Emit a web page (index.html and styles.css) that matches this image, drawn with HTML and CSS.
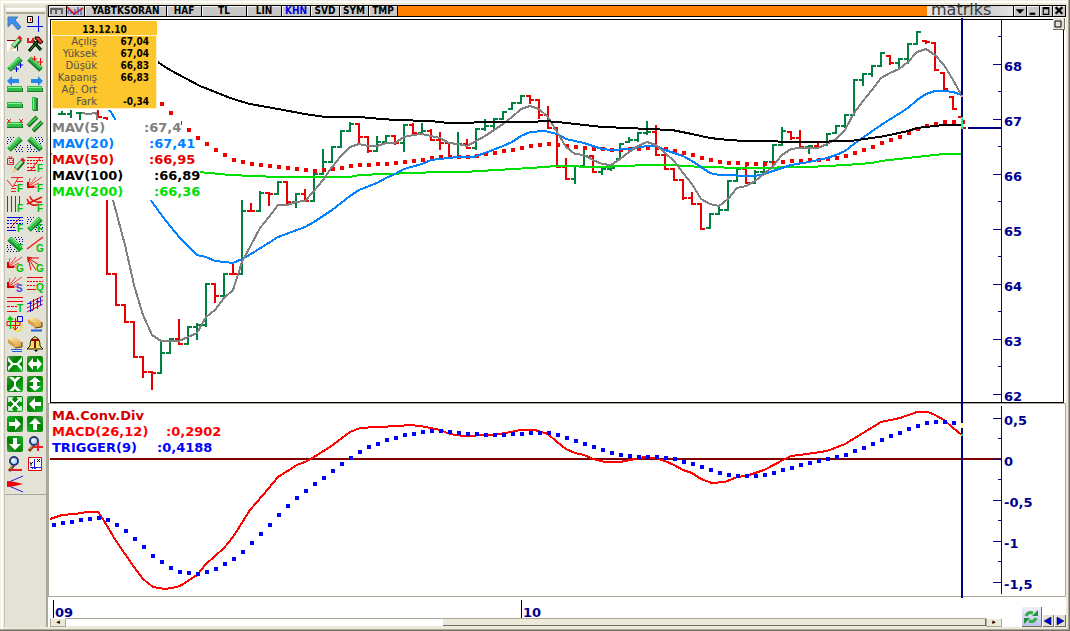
FILE: index.html
```html
<!DOCTYPE html>
<html lang="tr">
<head>
  <meta charset="UTF-8" />
  <meta name="viewport" content="width=device-width, initial-scale=1.0" />
  <title>YABTKSORAN</title>
  <link rel="stylesheet" href="styles.css">
</head>
<body>
  <svg class="defs" width="0" height="0" aria-hidden="true">
    <defs>
      <linearGradient id="tile" x1="0" y1="0" x2="1" y2="1">
        <stop offset="0" stop-color="#3c9c3c" /><stop offset=".4" stop-color="#008000" /><stop offset="1" stop-color="#18b428" />
      </linearGradient>
      <linearGradient id="gold" x1="0" y1="0" x2="1" y2="1">
        <stop offset="0" stop-color="#fff0b0" /><stop offset="1" stop-color="#d89838" />
      </linearGradient>
      <g id="diag"><path d="M2 14L14 3" stroke="#1c7c2c" stroke-width="5" /><path d="M2 13L13 2" stroke="#30c048" stroke-width="4" /><path d="M2 11L12 2" stroke="#90f098" /></g>
      <g id="back"><path d="M2 3L14 14" stroke="#1c7c2c" stroke-width="5" /><path d="M3 2L14 12" stroke="#30c048" stroke-width="4" /><path d="M4 2L14 11" stroke="#90f098" /></g>
      <g id="flat"><path d="M0 8h16v4H0z" fill="#1c7c2c" /><path d="M0 6h15v5H0z" fill="#30c048" /><path d="M1 7.500h13" stroke="#90f098" /></g>
      <g id="dots" fill="none" stroke="#000080" stroke-dasharray="1 2"><path d="M0 1.500h8M1 3.500h6M0 5.500h4M0 7.500h3M10 9.500h6M9 11.500h7M8 13.500h8M9 15.500h7" /></g>
      <g id="dots2" fill="none" stroke="#000080" stroke-dasharray="1 2"><path d="M8 1.500h8M9 3.500h7M12 5.500h4M13 7.500h3M0 9.500h4M0 11.500h6M1 13.500h8M0 15.500h10" /></g>
      <g id="fan" fill="none" stroke="#f04040"><path d="M1 11L15 1M1 11L9 1M1 11L3 2M1 11h9M1 12L12 7" /><path d="M1 6v5h6" stroke="#e00000" stroke-width="2" /></g>
      <g id="pencil"><path d="M6 11L13 3" stroke="#206020" stroke-width="5" /><path d="M6 10L12 3" stroke="#a0e8a0" stroke-width="3" /><path d="M12 3l2-2" stroke="#e02020" stroke-width="4" /><path d="M2 15l2-5 3 3z" fill="#f0c890" /></g>
      <g id="pane"><rect width="16" height="16" rx="2" fill="url(#tile)" /></g>
      <g id="arrow"><use href="#pane" /><path d="M2 8l6-6v4h6v4H8v4z" fill="#fff" /></g>
      <g id="lens"><path d="M7 9l-5 6" stroke="#804020" stroke-width="3" /><path d="M6 9l-3 4" stroke="#f0b060" /><circle cx="7" cy="5" r="4" fill="#b8e0ff" stroke="#283878" stroke-width="2" /><circle cx="6" cy="4" r="1.500" fill="#fff" /></g>
      <g id="eraser"><path d="M1 3l7-2 7 5v5l-6 1-8-5z" fill="url(#gold)" /><path d="M1 3l7 5v4l-7-5z" fill="#d8a050" /><path d="M8 12l7-1V6" fill="none" stroke="#604010" /></g>
    </defs>
  </svg>

  <div class="window">
    <aside class="toolbar" aria-label="Araçlar">
      <div class="grip"></div>
      <div class="tools">
        <button aria-label="Seç"><svg viewBox="0 0 16 16"><path d="M1 1h10L8 4l6 7-3 3-6-7-4 4z" fill="#3c90f0" stroke="#5078b0" /></svg></button>
        <button aria-label="İmleç"><svg viewBox="0 0 16 16"><path d="M11.500 0v16M0 10.500h16" stroke="#0000f0" /><path d="M.5.5h5v6h-5z" fill="#fff" stroke="#000" /><path d="M3.500 2v3" stroke="#f00" /></svg></button>
        <button aria-label="Çiz"><svg viewBox="0 0 16 16"><path d="M0 5h10v10H0z" fill="#fff" /><path d="M0 4.500h10.500V15" stroke="#900000" /><use href="#pencil" /></svg></button>
        <button aria-label="Ayarlar"><svg viewBox="0 0 16 16"><path d="M5 4l9 10" stroke="#000" stroke-width="3" /><path d="M5 4l9 10" stroke="#20b020" /><path d="M2 15L12 4" stroke="#000" stroke-width="3" /><path d="M3 14l7-8" stroke="#20c020" /><path d="M8 1h4l4 5-3 2-3-4-2-1z" fill="#f03020" stroke="#000" /><path d="M1 2v4h5V2" stroke="#e02020" stroke-width="2" /></svg></button>
        <button aria-label="Destek"><svg viewBox="0 0 16 16"><use href="#diag" /><path d="M7 13h5M9.500 11v5M11 9h5M13.500 7v5" stroke="#0000e0" /></svg></button>
        <button aria-label="Direnç"><svg viewBox="0 0 16 16"><use href="#back" /><path d="M5 3h5M7.500 0v5M10 6h6M13.500 2v7" stroke="#f00000" /></svg></button>
        <button aria-label="Sola uzat"><svg viewBox="0 0 16 16"><use href="#flat" y="4" /><path d="M0 5l5-5v3h7v4H5v3z" fill="#2888e8" /></svg></button>
        <button aria-label="Sağa uzat"><svg viewBox="0 0 16 16"><use href="#flat" y="4" /><path d="M16 5l-5-5v3H4v4h7v3z" fill="#2888e8" /></svg></button>
        <button aria-label="Yatay çizgi"><svg viewBox="0 0 16 16"><use href="#flat" /></svg></button>
        <button aria-label="Dikey çizgi"><svg viewBox="0 0 16 16"><path d="M6 2h5v13H6z" fill="#1c7c2c" /><path d="M5 1h4v13H5z" fill="#30c048" /><path d="M6.500 2v11" stroke="#90f098" /></svg></button>
        <button aria-label="Kanal ucu"><svg viewBox="0 0 16 16"><use href="#flat" /><path d="M0 3l4 4M4 3L0 7M12 3l4 4M16 3l-4 4" stroke="#f02020" /></svg></button>
        <button aria-label="Paralel"><svg viewBox="0 0 16 16"><path d="M1 10L10 1M6 15l9-9" stroke="#206020" stroke-width="4" /><path d="M1 9l9-8M6 14l9-8" stroke="#30d048" stroke-width="2" /></svg></button>
        <button aria-label="Bölge yukarı"><svg viewBox="0 0 16 16"><use href="#dots" /><use href="#diag" /></svg></button>
        <button aria-label="Bölge aşağı"><svg viewBox="0 0 16 16"><use href="#dots2" /><use href="#back" /></svg></button>
        <button aria-label="Not"><svg viewBox="0 0 16 16"><path d="M.5 2.500h6v6h-6zM2 0l1 2M5 0L4 2M2 4.500h1M5 4.500h1M2 6.500h4" stroke="#e02020" /><use href="#pencil" x="3" y="2" /></svg></button>
        <button aria-label="Fibonacci düzeltme"><svg viewBox="0 0 16 16"><path d="M0 1.500h16M0 14.500h9" stroke="#f00000" /><path d="M0 4.500h16M0 7.500h10M0 11.500h9" stroke="#f00000" stroke-dasharray="2 1" /><path d="M13 2L4 14" stroke="#f00000" /><text x="10" y="16">F</text></svg></button>
        <button aria-label="Fibonacci uzatma"><svg viewBox="0 0 16 16"><path d="M4 1.500h12M9 5.500h7M7 9.500h3M4 12.500h5M4 15.500h5M0 4l6 7 5-9" stroke="#f02020" /><text x="10" y="16">F</text></svg></button>
        <button aria-label="Fibonacci yelpaze"><svg viewBox="0 0 16 16"><use href="#fan" /><text x="10" y="16">F</text></svg></button>
        <button aria-label="Fibonacci zaman"><svg viewBox="0 0 16 16"><path d="M.5 0v16M4.500 0v16M8.500 0v16M12.500 0v8" stroke="#f00000" /><text x="10" y="16">F</text></svg></button>
        <button aria-label="Fibonacci yay"><svg viewBox="0 0 16 16"><path d="M0 8L15 1M3 0q1 7 12 6M0 3q4 9 12 5" stroke="#e01010" stroke-width="1.500" /><text x="10" y="16">F</text></svg></button>
        <button aria-label="Fibonacci kanal"><svg viewBox="0 0 16 16"><path d="M0 1.500h16M0 14.500h9" stroke="#0000f0" /><path d="M0 4.500h16M0 7.500h16M0 11.500h9" stroke="#0000f0" stroke-dasharray="2 1" /><path d="M13 2L3 12" stroke="#f00000" /><text x="10" y="16">F</text></svg></button>
        <button aria-label="Fibonacci bölge yukarı"><svg viewBox="0 0 16 16"><use href="#dots" /><use href="#diag" /><text x="10" y="16">F</text></svg></button>
        <button aria-label="Fibonacci bölge aşağı"><svg viewBox="0 0 16 16"><use href="#dots2" /><use href="#back" /><text x="10" y="16">F</text></svg></button>
        <button aria-label="Gann çizgisi"><svg viewBox="0 0 16 16"><path d="M0 13L16 1" stroke="#f02020" stroke-width="1.500" /><text x="9" y="16">G</text></svg></button>
        <button aria-label="Gann yelpaze"><svg viewBox="0 0 16 16"><use href="#fan" /><text x="9" y="16">G</text></svg></button>
        <button aria-label="Gann açıları"><svg viewBox="0 0 16 16"><path d="M1 2l3 12M1 2l8 12M1 2l11 7M1 2h11M0 1l5 1M1 1v5" stroke="#e00000" /><text x="9" y="16">G</text></svg></button>
        <button aria-label="Hız çizgileri"><svg viewBox="0 0 16 16"><use href="#fan" /><text x="9" y="16" class="violet">S</text></svg></button>
        <button aria-label="Çeyrek çizgileri"><svg viewBox="0 0 16 16"><path d="M0 1.500h16M0 13.500h9" stroke="#f00000" /><path d="M0 5.500h16M0 9.500h10" stroke="#f00000" stroke-dasharray="2 1" /><text x="9" y="15">Q</text></svg></button>
        <button aria-label="Tirone"><svg viewBox="0 0 16 16"><path d="M0 1.500h16M0 5.500h16M0 15.500h10" stroke="#f00000" /><path d="M0 10.500h10" stroke="#f00000" stroke-dasharray="3 1" /><text x="10" y="16">T</text></svg></button>
        <button aria-label="Regresyon"><svg viewBox="0 0 16 16"><path d="M0 8L16 0M0 12L16 4M0 16L16 8" stroke="#e00020" /><path d="M3.500 5v11M6.500 3v11M10.500 2v11M13.500 1v9M2 14.500h4M1 7.500h4M9 5.500h4" stroke="#2020e0" /></svg></button>
        <button aria-label="Şekiller"><svg viewBox="0 0 16 16"><circle cx="11" cy="11" r="4" stroke="#f0e000" stroke-width="1.500" /><path d="M0 5.500h13v4H0zM8.500 2v11M6 11l2 3 3-3" stroke="#f00000" /><path d="M10.500.5h5v5h-5z" stroke="#0000f0" /><path d="M3.500 13V1M1 4l2-3 3 3" stroke="#00c800" stroke-width="1.500" /></svg></button>
        <button aria-label="Sil"><svg viewBox="0 0 16 16"><use href="#eraser" /><path d="M4 14.500h11" stroke="#2060e0" stroke-width="2" /></svg></button>
        <button aria-label="Tümünü sil"><svg viewBox="0 0 16 16"><use href="#eraser" /><path d="M4 13.500h11M5 15.500h10" stroke="#2060e0" /></svg></button>
        <button aria-label="Alarm"><svg viewBox="0 0 16 16"><path d="M6 2q2-3 4 0 3 1 3 8l3 3H0l3-3q0-7 3-8z" fill="#f0e060" stroke="#202000" /><path d="M7 14h4l-2 2z" fill="#000" /><path d="M4 4h8M8 4v8" stroke="#900000" stroke-width="2" /></svg></button>
        <button aria-label="Yatay daralt"><svg viewBox="0 0 16 16"><use href="#pane" /><path d="M1 1l6 7-6 7M15 1L9 8l6 7" fill="#fff" /><path d="M4 8h8" stroke="#fff" stroke-width="2" /><path d="M1 5v6l3-3zM15 5v6l-3-3z" fill="#008000" /></svg></button>
        <button aria-label="Yatay genişlet"><svg viewBox="0 0 16 16"><use href="#pane" /><path d="M1 8l5-6v12zM15 8l-5-6v12z" fill="#fff" /><path d="M4 8h8" stroke="#fff" stroke-width="4" /></svg></button>
        <button aria-label="Dikey daralt"><svg viewBox="0 0 16 16"><use href="#pane" /><path d="M2 1l6 6 6-6M2 15l6-6 6 6" fill="#fff" /><path d="M5 0h6L8 3zM5 16h6l-3-3z" fill="#008000" /><path d="M8 3v10" stroke="#fff" stroke-width="2" /></svg></button>
        <button aria-label="Dikey genişlet"><svg viewBox="0 0 16 16"><use href="#pane" /><path d="M8 1l6 5H2zM8 15l6-5H2z" fill="#fff" /><path d="M8 4v8" stroke="#fff" stroke-width="4" /></svg></button>
        <button aria-label="Sığdır"><svg viewBox="0 0 16 16"><use href="#pane" /><path d="M3 3l10 10M13 3L3 13" stroke="#fff" stroke-width="2" /><path d="M2 6V2h4M10 2h4v4M14 10v4h-4M6 14H2v-4" stroke="#fff" stroke-width="1.500" /></svg></button>
        <button aria-label="Sol"><svg viewBox="0 0 16 16"><use href="#arrow" /></svg></button>
        <button aria-label="Sağ"><svg viewBox="0 0 16 16"><use href="#arrow" transform="rotate(180 8 8)" /></svg></button>
        <button aria-label="Yukarı"><svg viewBox="0 0 16 16"><use href="#arrow" transform="rotate(90 8 8)" /></svg></button>
        <button aria-label="Aşağı"><svg viewBox="0 0 16 16"><use href="#arrow" transform="rotate(270 8 8)" /></svg></button>
        <button aria-label="Yakınlaştır"><svg viewBox="0 0 16 16"><use href="#lens" /><path d="M6 11h10M11 6v9" stroke="#f02020" stroke-width="2" /></svg></button>
        <button aria-label="Uzaklaştır"><svg viewBox="0 0 16 16"><use href="#lens" /><path d="M4 14h11" stroke="#e02020" stroke-width="2" /></svg></button>
        <button aria-label="Eksenler"><svg viewBox="0 0 16 16"><path d="M1.500 1.500h13v13h-13z" fill="#fff" stroke="#f00000" /><path d="M7.500 3v10M3 11.500h11M5 13l2-2 2 2" stroke="#2020e0" /><path d="M10 3l3 3M13 3l-3 3M3 6l1 2 2-2M4 8v2" stroke="#000" /></svg></button>
        <button aria-label="Projeksiyon"><svg viewBox="0 0 16 16"><path d="M2 6L16 0M2 10l14 6" stroke="#2020e0" /><path d="M0 5l8 1 8 2-8 2-8 1z" fill="#f00000" /></svg></button>
      </div>
    </aside>

    <main class="chart">
      <header class="titlebar">
        <button aria-label="Bar tipi" class="pic"><svg viewBox="0 0 17 10"><path d="M2 8V3h5v5M7 3h6v5" stroke="#606060" stroke-width="2" /></svg></button>
        <button aria-label="Gösterge" class="pic"><svg viewBox="0 0 17 10"><path d="M0 1l7 7 9-6" stroke="#e02020" stroke-width="2" /><path d="M1 8V4M4 8V5M8 9V3M11 9V1M14 9V4" stroke="#2040d0" /></svg></button>
        <button class="symbol">YABTKSORAN</button>
        <button class="haf">HAF</button>
        <button class="cur">TL</button>
        <button class="haf">LIN</button>
        <button class="short on">KHN</button>
        <button class="short">SVD</button>
        <button class="short">SYM</button>
        <button class="short">TMP</button>
        <span class="fill"></span>
        <span class="brand">matriks</span>
        <button class="win" aria-label="Menü"><svg viewBox="0 0 10 9"><path d="M1 3h8L5 7z" /></svg></button>
        <button class="win" aria-label="Küçült"><svg viewBox="0 0 10 9"><path d="M2 6h5v2H2z" /></svg></button>
        <button class="win" aria-label="Büyüt"><svg viewBox="0 0 10 9"><path d="M2 1h6v7H2zM3 3v4h4V3z" fill-rule="evenodd" /></svg></button>
        <button class="win" aria-label="Kapat"><svg viewBox="0 0 10 9"><path d="M2 1l6 6M8 1L2 7" stroke="#000" stroke-width="2" /></svg></button>
      </header>

      <section class="panel price">
        <svg class="plot" id="price" viewBox="51 20 952 382" preserveAspectRatio="none">
          <path id="up" class="up" />
          <path id="down" class="down" />
          <polyline class="mav200" points="50,154 199,172 230,175 278,177 350,177 359,175 440,172 465,172 480,171 530,168 557,166 600,167 647,165 672,165 701,167 746,168 809,167 845,165 872,163 881,161 908,158 944,154 962,154" />
          <path id="mav50" class="mav50" />
          <polyline class="mav20" points="60,80 100,100 111,112 115,119 150,199 160,213 170,226 180,238 197,255 206,257 215,261 233,263 242,259 251,254 278,237 305,227 314,222 332,210 350,196 359,190 377,183 386,178 395,174 404,169 422,164 431,160 449,158 458,157 473,157 485,153 503,146 512,142 521,136 530,132 545,131 557,134 566,139 584,143 602,149 611,150 629,149 647,146 656,146 665,150 683,156 692,161 701,167 710,173 719,175 755,176 764,174 773,171 791,165 809,162 827,158 836,155 845,151 854,144 881,125 908,108 917,100 926,94 935,91 944,91 953,92 962,95" />
          <polyline class="mav5" points="82,113 88,114 96,113 106,160 113,200 125,245 134,285 143,315 152,335 161,341 179,341 188,337 197,333 206,317 215,310 224,298 233,290 242,262 251,245 260,228 269,217 278,205 287,205 296,202 305,201 314,191 323,180 332,167 341,156 350,147 359,144 368,146 377,146 386,143 395,143 404,137 413,135 422,134 431,136 440,138 449,143 458,144 467,146 476,141 485,136 494,130 503,124 512,117 521,109 530,106 539,109 548,117 557,132 566,147 575,154 584,155 593,160 602,164 611,165 620,159 629,152 638,146 647,142 656,145 665,153 674,161 683,173 692,184 701,199 710,204 719,206 728,199 737,188 746,186 755,181 764,174 773,166 782,155 791,149 800,148 818,148 827,144 836,139 845,130 854,113 863,101 872,90 881,78 890,73 899,69 908,62 917,52 926,49 935,55 944,65 953,80 962,96" />
          <polyline class="mav100" points="150,57 156,61 170,70 200,86 233,99 250,104 278,109 305,114 325,117 359,117 370,118 395,120 430,121 449,123 500,122 531,122 545,121 557,122 575,124 602,127 629,128 647,129 672,130 692,134 710,138 728,140 746,141 809,142 850,141 865,139 885,136 908,131 917,128 944,125 962,125" />
          <path class="cross" d="M968 128h34" />
          <path class="scale" d="M1001.500 20v382M993 64.500h8M993 119.500h8M993 174.500h8M993 229.500h8M993 284.500h8M993 339.500h8M993 394.500h8M998 36.500h4M998 91.500h4M998 146.500h4M998 201.500h4M998 256.500h4M998 311.500h4M998 366.500h4" />
        </svg>
        <ul class="axis">
          <li>68</li><li>67</li><li>66</li><li>65</li><li>64</li><li>63</li><li>62</li>
        </ul>

        <div class="overlay">
          <table class="quote">
            <caption>13.12.10</caption>
            <tr><th>Açılış</th><td>67,04</td></tr>
            <tr><th>Yüksek</th><td>67,04</td></tr>
            <tr><th>Düşük</th><td>66,83</td></tr>
            <tr><th>Kapanış</th><td>66,83</td></tr>
            <tr><th>Ağ. Ort</th><td></td></tr>
            <tr><th>Fark</th><td>-0,34</td></tr>
          </table>
          <dl class="legend">
            <div class="gray"><dt>MAV(5)</dt><dd>:67,4</dd></div>
            <div class="blue"><dt>MAV(20)</dt><dd>:67,41</dd></div>
            <div class="red"><dt>MAV(50)</dt><dd>:66,95</dd></div>
            <div class="black"><dt>MAV(100)</dt><dd>:66,89</dd></div>
            <div class="green"><dt>MAV(200)</dt><dd>:66,36</dd></div>
          </dl>
        </div>
        <button class="restore" aria-label="Paneli büyüt"><svg viewBox="0 0 8 8"><path d="M1 1h6v6H1z" fill="none" stroke="#000" /></svg></button>
      </section>

      <section class="panel macd">
        <svg class="plot" id="macd" viewBox="49 404 954 192" preserveAspectRatio="none">
          <path class="zero" d="M50 459h951" />
          <polyline class="line" points="50,519 62,515 75,514 87,512 98,512 103,519 116,541 134,567 143,579 153,587 165,589 172,588 180,586 197,575 206,564 224,548 233,537 250,510 263,495 278,477 297,465 305,462 314,457 330,447 350,432 360,428 376,427 400,426 409,425 420,426 431,428 440,430 450,434 463,436 490,435 500,434 521,430 535,430 548,434 557,442 566,449 575,453 584,455 593,459 605,462 620,462 635,459 645,457 655,458 665,461 674,465 683,470 692,473 701,479 712,483 725,482 737,477 746,476 764,470 785,459 791,456 800,455 827,451 845,444 863,433 881,422 900,418 917,412 928,412 935,415 944,420 953,428 962,435" />
          <path id="trigger" class="trigger" />
          <path class="scale" d="M1001.500 406v188M993 418.500h8M993 459.500h8M993 500.500h8M993 541.500h8M993 582.500h8M998 438.500h4M998 479.500h4M998 520.500h4M998 561.500h4" />
        </svg>
        <ul class="axis">
          <li>0,5</li><li>0</li><li>-0,5</li><li>-1</li><li>-1,5</li>
        </ul>
        <div class="overlay">
          <h2>MA.Conv.Div</h2>
          <dl class="legend">
            <div class="bright"><dt>MACD(26,12)</dt><dd>:0,2902</dd></div>
            <div class="navy"><dt>TRIGGER(9)</dt><dd>:0,4188</dd></div>
          </dl>
        </div>
      </section>
      <div class="cursor"><i class="bar"></i><i class="mark"></i><i class="trig"></i><i class="val"></i></div>

      <footer class="bottom">
        <div class="time">
          <div class="years"><span>09</span><span>10</span></div>
          <div class="scroll">
            <button aria-label="Geri">◂</button>
            <div class="track"><span class="thumb"></span></div>
            <button aria-label="İleri">▸</button>
          </div>
        </div>
        <div class="nav">
          <button class="refresh" aria-label="Yenile"><svg viewBox="0 0 16 16"><path d="M3 7q2-5 7-3M13 9q-2 5-7 3" fill="none" stroke="#30b040" stroke-width="3" /><path d="M9 7h6V1zM7 9H1v6z" fill="#209038" /></svg></button>
          <button aria-label="Önceki"><svg viewBox="0 0 8 8"><path d="M7 0v8L0 4z" fill="#0000e0" stroke="#000" stroke-width=".5" /></svg></button>
          <button aria-label="Sonraki"><svg viewBox="0 0 8 8"><path d="M1 0v8l7-4z" fill="#0000e0" stroke="#000" stroke-width=".5" /></svg></button>
        </div>
      </footer>
    </main>
  </div>

  <script>
    const STEP = 9;

    // high, low, close for each week; the open is the previous close
    const first = 62;
    const bars = [
      [112, 114, 114], [100, 117, 100], [113, 130, 113], [100, 105, 100], [100, 117, 117],
      [118, 274, 274], [274, 305, 305], [305, 322, 322], [322, 357, 357], [357, 377, 372],
      [372, 389, 373], [343, 373, 353], [339, 353, 339], [320, 344, 344], [327, 344, 327],
      [324, 339, 325], [284, 326, 284], [284, 302, 296], [274, 296, 274], [264, 274, 274.1],
      [201, 274, 211], [204, 211, 211.1], [192, 211, 193], [193, 205, 194], [182, 194, 182],
      [182, 203, 202], [194, 207, 194], [190, 201, 201], [174, 201, 174], [150, 174, 162],
      [147, 162, 147], [131, 147, 131], [123, 131, 124], [124, 143, 137], [137, 152, 151],
      [137, 151, 142], [136, 142, 136], [136, 144, 143], [125, 151, 125], [124, 134, 133],
      [124, 133, 131], [130, 140, 140], [133, 149, 143], [143, 158, 158], [133, 157, 144],
      [140, 148, 148], [129, 149, 129], [120, 130, 126], [119, 128, 119], [112, 119, 112],
      [103, 109, 103], [96, 103, 96], [96, 103, 100], [100, 118, 115], [107, 128, 128],
      [128, 167, 167], [159, 179, 179], [166, 183, 166], [149, 166, 156], [156, 172, 172],
      [167, 174, 169], [167, 170, 168], [144, 159, 144], [138, 142, 140], [133, 141, 133],
      [122, 134, 132], [126, 155, 155], [155, 169, 169], [169, 180, 180], [180, 199, 198],
      [193, 204, 204], [204, 229, 229], [214, 228, 214], [207, 214, 210], [181, 210, 181],
      [169, 181, 169], [166, 183, 183], [171, 183, 172], [162, 173, 162], [145, 162, 145],
      [128, 145, 131], [132, 139, 138], [131, 147, 147], [146, 153, 146], [143, 147, 147],
      [134, 145, 134], [126, 133, 126], [115, 127, 115], [80, 115, 80], [74, 85, 74],
      [66, 76, 66], [53, 66, 53], [56, 64, 63], [59, 67, 59], [44, 63, 44],
      [32, 44, 32], [41, 43, 42], [43, 70, 70], [73, 91, 89], [97, 109, 109], [117, 128, 128]
    ];

    const mav50 = [104, 113, 123, 130, 138, 144, 150, 155, 160, 162, 164, 165, 166, 167, 168, 169,
      170, 171, 170, 169, 168, 166, 165, 165, 164, 164, 163, 162, 161, 160, 158, 157, 157, 157, 157,
      156, 154, 153, 151, 150, 148, 146, 145, 144, 145, 146, 147, 148, 149, 149, 150, 150, 149, 149,
      148, 148, 149, 151, 153, 155, 158, 160, 162, 163, 163, 164, 164, 164, 163, 162, 161, 161, 160,
      160, 159, 158, 156, 153, 150, 147, 143, 140, 137, 133, 129, 126, 124, 122, 122, 122];

    const trigger = [525, 523, 522, 520, 519, 518, 520, 525, 531, 539, 547, 556, 562, 568, 572, 573,
      574, 572, 569, 564, 559, 552, 543, 534, 525, 515, 506, 498, 491, 484, 478, 471, 464, 458, 452,
      447, 444, 440, 438, 435, 434, 432, 431, 431, 432, 433, 434, 434, 435, 435, 435, 434, 434, 433,
      433, 433, 435, 438, 441, 444, 447, 450, 453, 455, 456, 457, 457, 457, 458, 459, 462, 464, 467,
      470, 473, 475, 476, 476, 476, 475, 473, 470, 468, 465, 463, 461, 459, 457, 455, 451, 448, 444,
      440, 436, 433, 429, 426, 423, 422, 422, 423];

    function drawBars() {
      let up = '', down = '', open = bars[0][2];
      bars.forEach(([high, low, close], i) => {
        const x = first + i * STEP;
        open = Math.min(Math.max(open, high), low);
        const d = `M${x} ${high - 1}V${low + 1}M${x - 4} ${open}h4M${x} ${close}h4`;
        if (close > open) down += d; else up += d;
        open = close;
      });
      document.getElementById('up').setAttribute('d', up);
      document.getElementById('down').setAttribute('d', down);
    }

    function drawDots(id, x0, values) {
      const d = values.map((y, i) => `M${x0 + i * STEP - 2} ${y - 2}h4v4h-4z`).join('');
      document.getElementById(id).setAttribute('d', d);
    }

    drawBars();
    drawDots('mav50', 162, mav50);
    drawDots('trigger', 54, trigger);
  </script>
</body>
</html>
```
FILE: styles.css
```css
* {
  box-sizing: border-box;
}

body {
  margin: 0;
  font-family: 'DejaVu Sans', Verdana, sans-serif;
  font-size: 13px;
  font-weight: bold;
  background: #ece9d8;
}

button {
  margin: 0;
  padding: 0;
  border: 0;
  background: none;
  font: inherit;
  color: inherit;
}

ul, dl, dd, h2 {
  margin: 0;
  padding: 0;
  list-style: none;
}

.defs {
  position: absolute;
}

.window {
  display: flex;
  height: 100vh;
  padding: 5px 4px 4px 4px;
  background: #ece9d8;
  box-shadow: inset -1px -1px #716f64, inset -2px -2px #aca899, inset 1px 1px #f1efe2, inset 3px 3px #fff;
}

/* left toolbar */
.toolbar {
  flex: none;
  width: 44px;
  background: #e3e2d6;
  border-right: 2px solid #aca899;
  border-left: 1px solid #c8c4b4;
}

.grip {
  height: 6px;
  margin: 3px 1px 2px;
  border-top: 2px solid #fff;
  border-bottom: 2px solid #aca899;
  background: #f1efe2;
}

.tools {
  display: grid;
  grid-template-columns: 16px 16px;
  grid-auto-rows: 16px;
  gap: 4px;
  padding: 0 2px 2px;
  border-bottom: 1px solid #aca899;
}

.tools svg {
  display: block;
  width: 16px;
  height: 16px;
  overflow: visible;
  fill: none;
}

.tools text {
  font-family: 'Liberation Sans', Arial, sans-serif;
  font-size: 10px;
  fill: #00c000;
}

.tools .violet {
  fill: #4848e0;
}

/* chart window */
.chart {
  position: relative;
  flex: 1;
  min-width: 0;
  display: flex;
  flex-direction: column;
  background: #fff;
}

.titlebar {
  display: flex;
  gap: 1px;
  height: 12px;
  margin-bottom: 2px;
  padding: 1px;
  background: #000;
  font-family: 'DejaVu Sans Condensed', 'DejaVu Sans', sans-serif;
  font-size: 10px;
  line-height: 10px;
}

.titlebar button {
  flex: none;
  background: #c8c8c8;
  box-shadow: inset 1px 1px #f4f4f4;
  white-space: nowrap;
}

.titlebar svg {
  display: block;
  width: 100%;
  height: 10px;
}

.titlebar .pic { width: 17px; fill: none; }
.titlebar .symbol { width: 81px; }
.titlebar .haf { width: 34px; }
.titlebar .cur { width: 44px; }
.titlebar .short { width: 28px; }
.titlebar .on { color: #0000e0; }
.titlebar .win { width: 12px; }

.fill {
  flex: 1;
  background: #ff8000;
}

.brand {
  width: 86px;
  margin-left: -1px;
  padding-left: 4px;
  background: linear-gradient(90deg, #e8e8e8, #c8c8c8 60%, #e4e4e4);
  color: #383838;
  font-family: 'DejaVu Sans', sans-serif;
  font-size: 16px;
  font-weight: normal;
  line-height: 8px;
}

.panel {
  position: relative;
  display: flex;
  min-height: 0;
}

.price {
  flex: 382 1 0;
  margin: 0 2px;
  border: 1px solid #000;
}

.macd {
  flex: 192 1 0;
  border: 1px solid #aca899;
}

.plot {
  display: block;
  flex: 1;
  min-width: 0;
  height: 100%;
  fill: none;
  stroke-width: 2;
  shape-rendering: crispEdges;
}

.up { stroke: #008040; }
.down { stroke: #e80000; }
.mav5 { stroke: #808080; }
.mav20 { stroke: #0080ff; }
.mav100 { stroke: #000; }
.mav200 { stroke: #00e000; }
.mav50 { fill: #f00000; }
.trigger { fill: #0000ff; }
.line { stroke: #ff0000; }
.zero { stroke: #800000; }
.cross { stroke: #000080; }

.scale {
  stroke: #000090;
  stroke-width: 1;
}

.axis {
  display: grid;
  flex: none;
  width: 60px;
  padding-left: 1px;
  color: #000090;
  line-height: 16px;
}

.price .axis {
  grid-template-rows: 55fr 55fr 55fr 55fr 55fr 55fr 13fr;
  padding-top: 39px;
}

.macd .axis {
  grid-template-rows: 41fr 41fr 41fr 41fr 19fr;
  width: 62px;
  padding-top: 9px;
}

.axis li {
  min-height: 0;
}

.overlay {
  position: absolute;
  top: 0;
  left: 0;
}

.quote {
  width: 105px;
  margin: 1px 0 11px 1px;
  border: 1px solid #fff0c8;
  border-collapse: separate;
  border-spacing: 0;
  background: #fcc62c;
  outline: 1px solid #fff;
  font-size: 10px;
  line-height: 12px;
}

.quote caption {
  padding-top: 3px;
  background: #fcc62c;
  font-family: 'DejaVu Sans Condensed', 'DejaVu Sans', sans-serif;
  line-height: 11px;
}

.quote th {
  width: 44px;
  padding: 0;
  text-align: right;
  font-weight: normal;
  color: #505050;
}

.quote td {
  padding: 0 7px 0 0;
  text-align: right;
  font-family: 'DejaVu Sans Condensed', 'DejaVu Sans', sans-serif;
}

.legend {
  padding-left: 1px;
  line-height: 16px;
}

.legend div {
  display: flex;
  width: max-content;
  background: #fff;
}

.legend dt {
  width: 97px;
}

.gray { color: #808080; }
.gray dt { width: 92px; }
.blue { color: #0080ff; }
.red { color: #e80000; }
.black { color: #000; }
.green { color: #00e000; }
.black dt, .green dt { width: 102px; }
.bright { color: #ff0000; }
.navy { color: #0000ff; }

.macd .overlay {
  padding: 4px 0 0 2px;
}

.macd h2 {
  padding-left: 1px;
  font-size: 13px;
  line-height: 16px;
  color: #d00000;
}

.macd .bright dt { width: 114px; }
.macd .navy dt { width: 105px; }

.restore {
  position: absolute;
  top: -2px;
  right: -2px;
  width: 12px;
  height: 12px;
  background: #e3e2d6;
  border-right: 1px solid #716f64;
  border-bottom: 1px solid #716f64;
}

.restore svg {
  display: block;
  width: 8px;
  height: 8px;
  margin: 1px;
}

/* vertical cursor on the last bar */
.cursor {
  position: absolute;
  top: 13px;
  right: 103px;
  bottom: 29px;
  width: 2px;
  background: #000080;
}

.cursor i {
  position: absolute;
  left: 0;
  width: 2px;
}

.cursor .bar {
  top: 99px;
  height: 12px;
  background: #20f080;
}

.cursor .mark {
  top: 77px;
  height: 2px;
  background: #ff8080;
}

.cursor .trig {
  bottom: 170px;
  height: 5px;
  background: #ffff80;
}

.cursor .val {
  bottom: 162px;
  height: 2px;
  background: #00f080;
}

/* time axis and scroll bar */
.bottom {
  display: flex;
  flex: none;
  height: 30px;
}

.time {
  flex: 1;
  display: flex;
  flex-direction: column;
}

.years {
  display: grid;
  grid-template-columns: 468fr 481fr;
  height: 21px;
  padding: 3px 0 0 5px;
  color: #000090;
}

.years span {
  padding: 6px 0 0 1px;
  border-left: 1px solid #000;
  line-height: 14px;
}

.scroll {
  display: flex;
  height: 9px;
  margin-left: 2px;
}

.scroll button {
  width: 16px;
  background: #ece9d8;
  border: 1px solid #aca899;
  border-top-color: #fff;
  font-size: 7px;
  line-height: 7px;
}

.track {
  display: flex;
  justify-content: flex-end;
  flex: 1;
  border-top: 1px solid #aca899;
  border-bottom: 1px solid #ece9d8;
}

.thumb {
  width: 59%;
  background: #ece9d8;
  border-right: 1px solid #716f64;
  border-bottom: 1px solid #716f64;
}

.nav {
  display: flex;
  align-items: flex-end;
  gap: 1px;
  width: 64px;
  padding-left: 20px;
}

.nav button {
  width: 11px;
  height: 12px;
  background: #e3e2d6;
  border-right: 1px solid #716f64;
  border-bottom: 1px solid #716f64;
}

.nav svg {
  display: block;
  width: 8px;
  height: 8px;
  margin: 1px;
}

.nav .refresh {
  width: 20px;
  height: 20px;
  background: linear-gradient(#f0f0f8, #c0c0f0);
}

.nav .refresh svg {
  width: 16px;
  height: 16px;
}
```
